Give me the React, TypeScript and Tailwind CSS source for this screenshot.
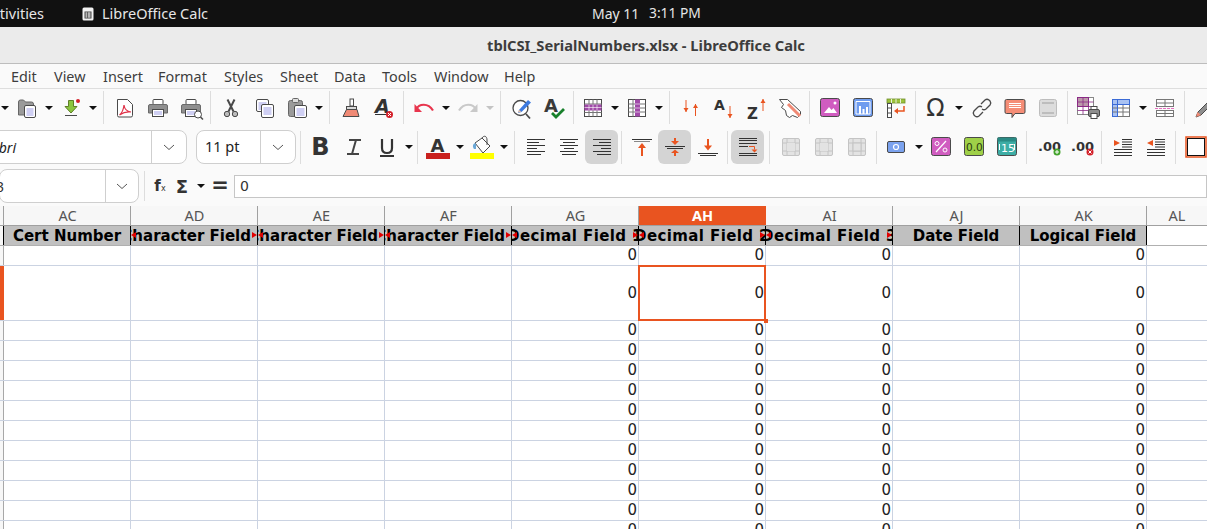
import React from "react";

const D = "#4a4a4a";
const O = "#e95420";

function I({ children }: { children: React.ReactNode }) {
  return (
    <svg width="24" height="24" viewBox="0 0 24 24" fill="none" strokeWidth="1" stroke="none" className="block overflow-visible">
      {children}
    </svg>
  );
}

const Lines = ({ x, y, w, n, c = "#9f9fe8", g = 2 }: { x: number; y: number; w: number; n: number; c?: string; g?: number }) => (
  <>
    {Array.from({ length: n }).map((_, i) => (
      <rect key={i} x={x} y={y + i * g} width={w} height="1" fill={c} />
    ))}
  </>
);

const Doc = ({ x, y, w, h }: { x: number; y: number; w: number; h: number }) => (
  <>
    <rect x={x + 0.5} y={y + 0.5} width={w} height={h} rx="1.5" fill="#fff" stroke={D} />
    <Lines x={x + 2.5} y={y + 3.5} w={w - 4} n={Math.floor((h - 4) / 2)} />
  </>
);

const Folder = () => (
  <I>
    <path d="M3.5 19V6q0-2 2-2h3l2 2h6q2 0 2 2v11z" fill="#9a9a9a" stroke="#666" />
    <Doc x={9} y={9} w={11} h={12} />
  </I>
);
const Down = () => (
  <I>
    <path d="M9.5 4.5h5v6h3.5l-6 6.5-6-6.5h3.500z" fill="#8bc53f" stroke="#5f7f28" />
    <rect x="6" y="19" width="12" height="1" fill={D} />
    <circle cx="19" cy="5" r="2" fill="#d3202a" />
  </I>
);
const Pdf = () => (
  <I>
    <path d="M4.500 3.500h10l5 5v11q0 1.500-1.500 1.500H6q-1.500 0-1.500-1.500z" fill="#fff" stroke={D} />
    <path d="M6.500 19c2.500-2 4-5.500 4.500-10 .5 4 2.500 6.500 7 7-4-.5-8 .5-11.500 3" stroke="#e0344a" strokeWidth="1.200" />
  </I>
);
const Printer = ({ zoom }: { zoom?: boolean }) => (
  <I>
    <rect x="7" y="3.500" width="10" height="5" rx="1" fill="#fff" stroke={D} />
    <path d="M4 8.500h16q1.500 0 1.500 1.500v7h-19v-7q0-1.500 1.500-1.500z" fill="#8f8f8f" stroke="#6a6a6a" />
    <rect x="6.500" y="13.500" width="11" height="7" fill="#fff" stroke={D} />
    <Lines x={8} y={15.500} w={8} n={2} />
    {zoom && (
      <>
        <circle cx="19" cy="18.500" r="3.500" fill="#fff" stroke={D} />
        <path d="M21.500 21l2.500 2.500" stroke={D} strokeWidth="1.500" />
      </>
    )}
  </I>
);
const Cut = () => (
  <I>
    <path d="M8.500 3.500l6 12M15.500 3.500l-6 12" stroke={D} strokeWidth="2" />
    <circle cx="8" cy="18" r="2.700" fill="#bbb" stroke={D} />
    <circle cx="16" cy="18" r="2.700" fill="#bbb" stroke={D} />
  </I>
);
const Copy = () => (
  <I>
    <Doc x={4} y={3} w={12} h={12} />
    <Doc x={9} y={8} w={12} h={13} />
  </I>
);
const Paste = () => (
  <I>
    <rect x="3.500" y="4.500" width="14" height="16" rx="2" fill="#9a9a9a" stroke="#666" />
    <rect x="7.500" y="2.500" width="6" height="4" rx="1" fill="#ddd" stroke="#666" />
    <Doc x={9} y={9} w={12} h={12} />
  </I>
);
const Brush = () => (
  <I>
    <rect x="11" y="3" width="3.500" height="7" fill="#fff" stroke={D} />
    <rect x="7.500" y="10.500" width="10" height="3" fill="#d9d9d9" stroke={D} />
    <path d="M7.500 13.500h10.500l2 7H4z" fill="#f08a75" stroke={D} />
  </I>
);
const ClearA = () => (
  <I>
    <text x="3" y="17" fontFamily="DejaVu Sans" fontStyle="italic" fontWeight="700" fontSize="19" fill="#333">A</text>
    <rect x="3" y="18" width="11" height="1" fill="#333" />
    <circle cx="17.500" cy="18.500" r="3.500" fill="#d3202a" />
    <path d="M16 17l3 3M19 17l-3 3" stroke="#fff" />
  </I>
);
const Undo = ({ c }: { c: string }) => (
  <I>
    <path d="M4 13.500c3-6 12-7 17 1" stroke={c} strokeWidth="2.200" />
    <path d="M2.500 8v8h7.500z" fill={c} />
  </I>
);
const Redo = () => (
  <I>
    <path d="M20 13.500c-3-6-12-7-17 1" stroke="#c9c9c9" strokeWidth="2.200" />
    <path d="M21.500 8v8h-7.500z" fill="#c9c9c9" />
  </I>
);
const Find = () => (
  <I>
    <circle cx="10.500" cy="12" r="7.500" fill="#fff" stroke={D} strokeWidth="1.300" />
    <path d="M16 18l4 4.500" stroke={D} strokeWidth="1.800" />
    <path d="M9 14l9-10 3 2.500-9.500 9.500-3.500 1z" fill="#3d7ae0" />
    <path d="M9 14l2.500 1.500-3.500 1z" fill="#f2c29b" />
  </I>
);
const Spell = () => (
  <I>
    <text x="1" y="16" fontFamily="DejaVu Sans" fontWeight="700" fontSize="18" fill="#3a3a3a">A</text>
    <path d="M9 17l4 4 8-8" stroke="#18802b" strokeWidth="2.800" />
  </I>
);
const RowGrid = () => (
  <I>
    <rect x="3.500" y="3.500" width="17" height="17" fill="#fff" stroke={D} />
    <path d="M3.500 8h17M3.500 16.500h17M8 3.500v17M12 3.500v17M16 3.500v17" stroke="#777" />
    <rect x="3.500" y="8.500" width="17" height="6" fill="#a04aa8" />
    <path d="M8 8.500v6M12 8.500v6M16 8.500v6M3.500 11.500h17" stroke="#fff" strokeWidth=".6" />
  </I>
);
const ColGrid = () => (
  <I>
    <rect x="3.500" y="3.500" width="17" height="17" fill="#fff" stroke={D} />
    <path d="M3.500 8h17M3.500 12h17M3.500 16h17M8 3.500v17" stroke="#777" />
    <rect x="10" y="3.500" width="5" height="17" fill="#a04aa8" />
    <path d="M10 8h5M10 12h5M10 16h5" stroke="#fff" strokeWidth=".6" />
  </I>
);
const Arrow = ({ x, y1, y2, c = O }: { x: number; y1: number; y2: number; c?: string }) => {
  const up = y2 < y1;
  return (
    <>
      <rect x={x - 0.5} y={Math.min(y1, y2)} width="1" height={Math.abs(y2 - y1)} fill={c} />
      <path d={up ? `M${x - 2.500} ${y2 + 4}h5l-2.500-4z` : `M${x - 2.500} ${y2 - 4}h5l-2.500 4z`} fill={c} />
    </>
  );
};
const Sort = () => (
  <I>
    <Arrow x={7} y1={4} y2={16} />
    <Arrow x={16.500} y1={20} y2={8} />
  </I>
);
const SortA = () => (
  <I>
    <text x="2" y="14" fontFamily="DejaVu Sans" fontWeight="700" fontSize="14" fill="#333">A</text>
    <Arrow x={18} y1={10} y2={22} />
  </I>
);
const SortZ = () => (
  <I>
    <text x="2" y="23" fontFamily="DejaVu Sans" fontWeight="700" fontSize="15" fill="#333">Z</text>
    <Arrow x={18} y1={15} y2={3} />
  </I>
);
const Filter = () => (
  <I>
    <path d="M1.500 3.500h8l13 12v3l-3 3-5-2-3 2-3-2-1-5-4-3 2-3z" fill="#fff" stroke={D} />
    <path d="M10 8l12 12" stroke="#f08a75" strokeWidth="3" />
  </I>
);
const Square = ({ bg, children }: { bg: string; children?: React.ReactNode }) => (
  <I>
    <rect x="2.500" y="2.500" width="19" height="18" rx="2" fill={bg} stroke={D} />
    {children}
  </I>
);
const Image = () => (
  <Square bg="#d05cc0">
    <path d="M6 17l5-6 2.500 3 2-2 3.500 5z" fill="#fff" />
    <circle cx="17" cy="7" r="1.500" fill="#fff" />
  </Square>
);
const Chart = () => (
  <Square bg="#6f9cef">
    <path d="M5 5.500v12.500h14M5 5.500h14v12.500" stroke="#fff" fill="none" />
    <rect x="8" y="10" width="2" height="8" fill="#fff" />
    <rect x="11.500" y="13" width="2" height="5" fill="#fff" />
    <rect x="15" y="11" width="2" height="7" fill="#fff" />
  </Square>
);
const Pivot = () => (
  <I>
    <rect x="3" y="3" width="18" height="4" fill="#9cc23c" stroke="#70902a" strokeWidth=".8" />
    <path d="M7.500 3v4M12 3v4M16.500 3v4" stroke="#fff" strokeWidth=".8" />
    <rect x="3.500" y="7.500" width="4" height="14" fill="#fff" stroke={D} />
    <path d="M3.500 12h4M3.500 17h4" stroke={D} />
    <path d="M20 10v5h-8" stroke={O} strokeWidth="1.500" />
    <path d="M14 12l-4 3 4 3z" fill={O} />
  </I>
);
const Link = () => (
  <I>
    <path d="M11 8l4-4q2-1.500 4 0l1 1q1.500 2 0 4l-4 4q-2 1.500-4 0M13 16l-4 4q-2 1.500-4 0l-1-1q-1.500-2 0-4l4-4q2-1.500 4 0" stroke={D} strokeWidth="1.300" />
  </I>
);
const Comment = () => (
  <I>
    <path d="M3.500 3.500h17q1.500 0 1.500 1.500v11q0 1.500-1.500 1.500H12l-3 4v-4H3.500Q2 17.500 2 16V5q0-1.500 1.500-1.500z" fill="#f58d76" stroke={D} />
    <Lines x={6} y={7} w={12} n={3} c="#fff" />
  </I>
);
const HeaderIcon = () => (
  <I>
    <rect x="3.500" y="3.500" width="17" height="17" rx="2" fill="#dcdcdc" stroke="#bdbdbd" />
    <rect x="6" y="6" width="12" height="2" fill="#bdbdbd" />
    <rect x="6" y="16" width="12" height="2" fill="#bdbdbd" />
  </I>
);
const PrintArea = () => (
  <I>
    <rect x="1.500" y="1.500" width="16" height="17" fill="#fff" stroke="#888" />
    <rect x="1.500" y="1.500" width="11" height="9" fill="#b9a" stroke="#8a2a86" />
    <path d="M1.500 6h16M1.500 10.500h16M1.500 14.500h11M7 1.500v17M12.500 1.500v13" stroke="#8a2a86" strokeWidth=".8" />
    <rect x="12.500" y="13.500" width="11" height="7" rx="1.500" fill="#8f8f8f" stroke={D} />
    <rect x="15" y="10.500" width="6" height="3" fill="#fff" stroke={D} />
    <rect x="15" y="17.500" width="6" height="5" fill="#fff" stroke={D} />
  </I>
);
const Freeze = () => (
  <I>
    <rect x="3.500" y="3.500" width="17" height="17" fill="#fff" stroke="#777" />
    <rect x="3.500" y="3.500" width="17" height="5" fill="#a9c2f2" stroke="#3b6bd6" />
    <rect x="3.500" y="3.500" width="5" height="17" fill="#a9c2f2" stroke="#3b6bd6" />
    <path d="M9 12h11M9 16h11M3.500 12h5M3.500 16h5M14 8.500v12" stroke="#777" />
    <path d="M8.500 3.500v17M3.500 8.500h17" stroke="#3b6bd6" />
  </I>
);
const Split = () => (
  <I>
    <rect x="3.500" y="3.500" width="17" height="7" fill="#fff" stroke="#777" />
    <rect x="3.500" y="14.500" width="17" height="6" fill="#fff" stroke="#777" />
    <path d="M12 3.500v7M12 14.500v6M3.500 7h17M3.500 17.500h17" stroke="#777" />
    <path d="M2 12.500h20" stroke="#e76fc1" strokeDasharray="3 1" />
  </I>
);
const Pencil = () => (
  <I>
    <path d="M3 21l2-5 11-11 3 3-11 11z" fill="#8f8f8f" stroke={D} />
    <path d="M3 21l1.500-5 3.500 3z" fill="#f08a75" />
  </I>
);
const AlignIcon = ({ kind }: { kind: "l" | "c" | "r" }) => {
  const lens = [18, 12, 18, 10, 18, 14];
  return (
    <I>
      {lens.map((w, i) => (
        <rect key={i} x={kind === "l" ? 3 : kind === "c" ? 12 - w / 2 : 21 - w} y={4 + i * 3} width={w} height="1" fill="#333" />
      ))}
    </I>
  );
};
const VTop = () => (
  <I>
    <rect x="2" y="4" width="20" height="1" fill="#333" /><rect x="4" y="6" width="16" height="1" fill="#888" />
    <rect x="11" y="11" width="2" height="10" fill={O} /><path d="M8 13l4-5 4 5z" fill={O} />
  </I>
);
const VMid = () => (
  <I>
    <rect x="2" y="11" width="20" height="1" fill="#333" /><rect x="4" y="13" width="16" height="1" fill="#333" />
    <rect x="11" y="3" width="2" height="3" fill={O} /><path d="M8 6h8l-4 4z" fill={O} />
    <rect x="11" y="18" width="2" height="3" fill={O} /><path d="M8 18h8l-4-3.500z" fill={O} />
  </I>
);
const VBot = () => (
  <I>
    <rect x="2" y="18" width="20" height="1" fill="#333" /><rect x="4" y="20" width="16" height="1" fill="#333" />
    <rect x="11" y="4" width="2" height="8" fill={O} /><path d="M8 10.500h8l-4 5z" fill={O} />
  </I>
);
const Wrap = () => (
  <I>
    <rect x="3" y="3" width="18" height="1" fill="#333" /><rect x="3" y="5" width="18" height="1" fill="#333" />
    <rect x="3" y="8" width="18" height="1" fill="#333" /><rect x="3" y="11" width="9" height="1" fill="#333" />
    <rect x="3" y="18" width="18" height="1" fill="#333" /><rect x="3" y="20" width="18" height="1" fill="#333" />
    <path d="M13 11.500h5.500v3" stroke={O} />
    <path d="M15.500 14.500h6l-3 3z" fill={O} />
  </I>
);
const FontColor = () => (
  <I>
    <text x="4.500" y="17" fontFamily="DejaVu Sans" fontWeight="700" fontSize="18" fill="#333">A</text>
    <rect x="0" y="18" width="24" height="6" fill="#c9211e" />
  </I>
);
const Fill = () => (
  <I>
    <path d="M5 8l7-5 8 8-7 7z" fill="#fff" stroke={D} />
    <path d="M5 8c-2 1-3 3-1 6h2V9z" fill="#6aa8d8" />
    <path d="M12 3c2-3 5-2 5 2v5" stroke={D} />
    <rect x="0" y="18" width="24" height="6" fill="#ffff00" />
  </I>
);
const Bold = () => <span className="font-['DejaVu_Sans'] font-bold text-[24px] leading-none text-[#333]">B</span>;
const Italic = () => (
  <I>
    <path d="M7 5h12M5 19h12M14 5l-4 14" stroke="#444" strokeWidth="2" />
  </I>
);
const Under = () => (
  <I>
    <path d="M7 4v9q0 5 5 5t5-5V4" stroke="#333" strokeWidth="2.200" />
    <rect x="5" y="20" width="14" height="2" fill="#333" />
  </I>
);
const Merge = ({ v }: { v: number }) => (
  <I>
    <rect x="3.500" y="3.500" width="17" height="17" rx="1.500" fill="#e3e3e3" stroke="#c4c4c4" />
    <path d="M3.500 8h17M3.500 16h17M8 3.500v17M16 3.500v17" stroke="#c4c4c4" />
    <rect x="8" y="8" width="8" height="8" fill="#e3e3e3" stroke={v === 0 ? "none" : "#c4c4c4"} />
  </I>
);
const Currency = () => (
  <I>
    <rect x="2.500" y="6.500" width="17" height="11" rx="1.500" fill="#7ba2ee" stroke={D} />
    <circle cx="11" cy="12" r="2.500" stroke="#fff" strokeWidth="1.200" />
  </I>
);
const Pct = () => (
  <Square bg="#d05cc0">
    <path d="M7 17L17 6" stroke="#fff" strokeWidth="1.200" />
    <circle cx="8" cy="8.500" r="2" stroke="#fff" /><circle cx="16" cy="15" r="2" stroke="#fff" />
  </Square>
);
const Num = () => (
  <Square bg="#9fd048">
    <text x="4" y="16" fontFamily="DejaVu Sans" fontSize="10.500" fill="#2a3a10">0.0</text>
  </Square>
);
const DateI = () => (
  <Square bg="#3dada5">
    <rect x="2.500" y="2.500" width="19" height="4" fill="#2a8a84" />
    <text x="6" y="17" fontFamily="DejaVu Sans" fontSize="11" fill="#fff">15</text>
    <path d="M4.500 9v6M19.500 9v6" stroke="#fff" />
  </Square>
);
const Dec = ({ add }: { add: boolean }) => (
  <I>
    <text x="3" y="16" fontFamily="DejaVu Sans" fontWeight="700" fontSize="13" fill="#333">.00</text>
    <circle cx="22" cy="17" r="3.500" fill={add ? "#43a32c" : "#d3202a"} />
    {add ? <path d="M20 17h4M22 15v4" stroke="#fff" /> : <path d="M20.500 15.500l3 3M23.500 15.500l-3 3" stroke="#fff" />}
  </I>
);
const Indent = ({ inc }: { inc: boolean }) => (
  <I>
    {inc ? <path d="M3 5v6l6-3z" fill={O} /> : <path d="M9 5v6l-6-3z" fill={O} />}
    <Lines x={11} y={4} w={10} n={4} c="#333" g={2.500} />
    <Lines x={3} y={14} w={18} n={3} c="#333" g={3} />
  </I>
);
const Border = () => (
  <I>
    <rect x="2" y="2" width="20" height="20" fill="#fff" stroke={O} strokeWidth="1.500" />
    <rect x="3.500" y="3.500" width="17" height="17" fill="#fff" stroke="#111" />
  </I>
);

const Btn = ({ children, active }: { children: React.ReactNode; active?: boolean }) => (
  <div className={active ? "w-[33px] h-[34px] shrink-0 flex items-center justify-center bg-[#d4d4d4] rounded-md" : "w-[33px] h-[34px] shrink-0 flex items-center justify-center"}>
    {children}
  </div>
);
const Dd = ({ wide }: { wide?: boolean }) => (
  <div className={wide ? "w-[13px] shrink-0 flex justify-center" : "w-[11px] shrink-0 flex justify-center"}>
    <div className="w-0 h-0 border-x-[4px] border-x-transparent border-t-[4px] border-t-[#111]" />
  </div>
);
const DdOff = () => (
  <div className="w-[11px] shrink-0 flex justify-center">
    <div className="w-0 h-0 border-x-[4px] border-x-transparent border-t-[4px] border-t-[#c4c4c4]" />
  </div>
);
const Sep = () => (
  <div className="w-[7px] shrink-0 flex justify-center">
    <div className="w-px h-[33px] bg-[#dddddd]" />
  </div>
);
const SepW = () => (
  <div className="w-[10px] shrink-0 flex justify-center">
    <div className="w-px h-[33px] bg-[#dddddd]" />
  </div>
);
const Chevron = () => (
  <svg width="12" height="7" viewBox="0 0 12 7" fill="none"><path d="M1 1l5 4.500L11 1" stroke="#555" /></svg>
);
const Combo = ({ text, w, italic, cls, btn }: { text: string; w: string; italic?: boolean; cls: string; btn: string }) => (
  <div className={`${w} ${cls} h-[34px] shrink-0 flex border border-[#cfcfcf] rounded-lg bg-white`}>
    <div className={italic ? "flex-1 min-w-0 flex items-center justify-end text-[14px] italic text-[#222] pr-[135px] whitespace-nowrap" : "flex-1 min-w-0 flex items-center pl-[8px] text-[14.5px] text-[#222] whitespace-nowrap"}>
      {text}
    </div>
    <div className={`${btn} shrink-0 flex items-center justify-center border-l border-[#cfcfcf]`}><Chevron /></div>
  </div>
);

const Menu = ({ t, w }: { t: string; w: string }) => <div className={`${w} shrink-0`}>{t}</div>;

const cols = [
  { l: "AC", h: "Cert Number" },
  { l: "AD", h: "Character Field 1", o: true },
  { l: "AE", h: "Character Field 2", o: true },
  { l: "AF", h: "Character Field 3", o: true },
  { l: "AG", h: "Decimal Field 1", o: true, n: true, t: true },
  { l: "AH", h: "Decimal Field 2", o: true, n: true, s: true, t: true },
  { l: "AI", h: "Decimal Field 3", o: true, n: true, t: true },
  { l: "AJ", h: "Date Field" },
  { l: "AK", h: "Logical Field", n: true },
];

const Row = ({ h, sel }: { h: string; sel?: boolean }) => (
  <div className={`${h} flex shrink-0 border-b border-[#cbd3e2]`}>
    <div className={sel ? "w-[4px] shrink-0 bg-[#e95420]" : "w-[4px] shrink-0 bg-[#f7f7f7] border-r border-[#a8a8a8]"} />
    {cols.map((c) => (
      <div key={c.l} className="w-[127px] shrink-0 border-r border-[#cbd3e2] flex items-center justify-end pr-[1px] text-[15px] text-[#222] leading-none">
        {c.n ? "0" : ""}
      </div>
    ))}
  </div>
);

export default function App() {
  return (
    <div className="w-[1207px] h-[529px] overflow-hidden bg-white flex flex-col font-['Noto_Sans',sans-serif]">
      <div className="h-[27px] shrink-0 bg-[#111111] flex items-center text-[14px] text-[#e6e6e6] whitespace-nowrap">
        <div className="w-[82px] shrink-0 flex justify-end pr-[38px] text-[14.5px]">tivities</div>
        <svg width="12" height="14" viewBox="0 0 12 14" className="shrink-0">
          <rect x=".5" y=".5" width="11" height="13" rx="1.500" fill="#f2f2f2" />
          <rect x="3" y="5" width="6" height="6" fill="none" stroke="#444" />
          <path d="M3 7h6M3 9h6M5.500 5v6" stroke="#444" strokeWidth=".7" />
        </svg>
        <div className="w-[498px] shrink-0 pl-[8px] text-[14.5px]">LibreOffice Calc</div>
        <div className="w-[57px] shrink-0">May 11</div>
        <div className="text-[13.8px]">3:11 PM</div>
      </div>

      <div className="h-[37px] shrink-0 bg-[#ebebeb] border-b border-[#bdbdbd] flex items-center justify-center pl-[85px] text-[14.7px] font-bold text-[#3d3d3d]">
        tblCSI_SerialNumbers.xlsx - LibreOffice Calc
      </div>

      <div className="h-[25px] shrink-0 bg-[#fafafa] border-b border-[#dedede] flex items-center pl-[11px] pt-[2px] text-[14.4px] text-[#3d3d3d]">
        <Menu t="Edit" w="w-[43px]" />
        <Menu t="View" w="w-[49px]" />
        <Menu t="Insert" w="w-[55px]" />
        <Menu t="Format" w="w-[66px]" />
        <Menu t="Styles" w="w-[56px]" />
        <Menu t="Sheet" w="w-[54px]" />
        <Menu t="Data" w="w-[48px]" />
        <Menu t="Tools" w="w-[52px]" />
        <Menu t="Window" w="w-[70px]" />
        <Menu t="Help" w="w-[40px]" />
      </div>

      <div className="h-[39px] shrink-0 bg-[#fafafa] flex items-center pb-[2px] overflow-hidden">
        <div className="w-[10px] shrink-0 flex justify-center"><div className="w-0 h-0 border-x-[4px] border-x-transparent border-t-[4px] border-t-[#111]" /></div>
        <Btn><Folder /></Btn><Dd />
        <Btn><Down /></Btn><Dd /><SepW />
        <Btn><Pdf /></Btn><Btn><Printer /></Btn><Btn><Printer zoom /></Btn><Sep />
        <Btn><Cut /></Btn><Btn><Copy /></Btn><Btn><Paste /></Btn><Dd /><SepW />
        <Btn><Brush /></Btn><Btn><ClearA /></Btn><Sep />
        <Btn><Undo c="#e8354d" /></Btn><Dd />
        <Btn><Redo /></Btn><DdOff /><SepW />
        <Btn><Find /></Btn><Btn><Spell /></Btn>
        <div className="w-[5px] shrink-0 flex justify-center"><div className="w-px h-[33px] bg-[#dddddd]" /></div>
        <Btn><RowGrid /></Btn><Dd />
        <Btn><ColGrid /></Btn><Dd /><SepW />
        <Btn><Sort /></Btn><Btn><SortA /></Btn><Btn><SortZ /></Btn><Btn><Filter /></Btn><Sep />
        <Btn><Image /></Btn><Btn><Chart /></Btn><Btn><Pivot /></Btn><Sep />
        <Btn><span className="font-['DejaVu_Sans'] text-[24px] leading-none text-[#333]">Ω</span></Btn><Dd wide />
        <Btn><Link /></Btn><Btn><Comment /></Btn><Btn><HeaderIcon /></Btn><Sep />
        <Btn><PrintArea /></Btn><Btn><Freeze /></Btn><Dd />
        <Btn><Split /></Btn><Sep />
        <Btn><Pencil /></Btn>
      </div>

      <div className="h-[38px] shrink-0 bg-[#fafafa] flex items-center overflow-hidden">
        <Combo text="Calibri" w="w-[200px]" cls="-ml-[13px]" italic btn="w-[35px]" />
        <Combo text="11 pt" w="w-[100px]" cls="ml-[9px]" btn="w-[35px]" />
        <div className="w-[8px] shrink-0 flex justify-center"><div className="w-px h-[33px] bg-[#dddddd]" /></div>
        <Btn><Bold /></Btn><Btn><Italic /></Btn><Btn><Under /></Btn><Dd /><Sep />
        <Btn><FontColor /></Btn><Dd />
        <Btn><Fill /></Btn><Dd /><SepW />
        <Btn><AlignIcon kind="l" /></Btn><Btn><AlignIcon kind="c" /></Btn><Btn active><AlignIcon kind="r" /></Btn><Sep />
        <Btn><VTop /></Btn><Btn active><VMid /></Btn><Btn><VBot /></Btn><Sep />
        <Btn active><Wrap /></Btn><SepW />
        <Btn><Merge v={0} /></Btn><Btn><Merge v={0} /></Btn><Btn><Merge v={1} /></Btn><Sep />
        <Btn><Currency /></Btn><Dd />
        <Btn><Pct /></Btn><Btn><Num /></Btn><Btn><DateI /></Btn><Sep />
        <Btn><Dec add /></Btn><Btn><Dec add={false} /></Btn><SepW />
        <Btn><Indent inc /></Btn><Btn><Indent inc={false} /></Btn><Sep />
        <Btn><Border /></Btn>
      </div>

      <div className="h-[40px] shrink-0 bg-[#fafafa] flex items-center whitespace-nowrap">
        <div className="w-[140px] h-[34px] shrink-0 -ml-[1px] flex border border-[#cfcfcf] rounded-lg bg-white overflow-hidden">
          <div className="w-[105px] shrink-0 flex items-center justify-end pr-[101px] text-[14px] text-[#333]">AH3</div>
          <div className="flex-1 flex items-center justify-center border-l border-[#cfcfcf]"><Chevron /></div>
        </div>
        <div className="w-[10px] shrink-0 flex justify-center"><div className="w-px h-[30px] bg-[#dddddd]" /></div>
        <div className="w-[22px] shrink-0 h-[34px] flex items-center justify-center font-['DejaVu_Sans'] font-bold text-[15px] text-[#333]">f<span className="text-[8px] font-normal mt-[5px]">x</span></div>
        <div className="w-[22px] shrink-0 h-[34px] flex items-center justify-center font-['DejaVu_Sans'] font-bold text-[18px] text-[#333]">Σ</div>
        <div className="w-[16px] shrink-0 h-[34px] flex items-center justify-center"><div className="w-0 h-0 border-x-[4px] border-x-transparent border-t-[4px] border-t-[#111]" /></div>
        <div className="w-[22px] shrink-0 h-[34px] flex items-center justify-center font-['DejaVu_Sans'] font-bold text-[21px] text-[#333]">=</div>
        <div className="flex-1 ml-[3px] h-[23px] border border-[#c6c6c6] bg-white flex items-center pl-[5px] font-['DejaVu_Sans'] text-[14px] text-[#333]">0</div>
      </div>

      <div className="h-[20px] shrink-0 flex border-b border-[#a0a0a0] bg-[#f7f7f7] text-[14.5px] text-[#555]">
        <div className="w-[4px] shrink-0 border-r border-[#a0a0a0]" />
        {cols.map((c) => (
          <div key={c.l} className={c.s ? "w-[127px] shrink-0 flex items-center justify-center bg-[#e95420] text-white font-bold" : "w-[127px] shrink-0 flex items-center justify-center pl-px border-r border-[#a0a0a0]"}>
            {c.l}
          </div>
        ))}
        <div className="w-[60px] shrink-0 flex items-center justify-center">AL</div>
      </div>

      <div className="h-[20px] shrink-0 flex border-b border-[#b0b0b0] font-['DejaVu_Sans'] font-bold text-[15px] text-black">
        <div className="w-[4px] shrink-0 bg-[#f7f7f7] border-r border-black" />
        {cols.map((c) => (
          <div key={c.l} className="relative w-[127px] shrink-0 bg-[#c0c0c0] border-r border-black overflow-hidden flex justify-center items-center pt-[2px] whitespace-nowrap leading-none">
            <span className={c.t ? "shrink-0 tracking-[0.4px]" : "shrink-0"}>{c.h}</span>
            {c.o && (
              <>
                <div className="absolute left-0 top-[6px] w-0 h-0 border-y-[3px] border-y-transparent border-r-[5px] border-r-[#e00000]" />
                <div className="absolute right-0 top-[6px] w-0 h-0 border-y-[3px] border-y-transparent border-l-[5px] border-l-[#e00000]" />
              </>
            )}
          </div>
        ))}
      </div>

      <div className="relative flex-1 font-['DejaVu_Sans']">
        <Row h="h-[20px]" />
        <Row h="h-[55px]" sel />
        {Array.from({ length: 11 }).map((_, i) => (
          <Row key={i} h="h-[20px]" />
        ))}
        <div className="absolute left-[638px] top-[19px] w-[128px] h-[56px] border-2 border-[#e95420]" />
        <div className="absolute left-[764px] top-[73px] w-[4px] h-[4px] bg-[#e95420]" />
      </div>
    </div>
  );
}
